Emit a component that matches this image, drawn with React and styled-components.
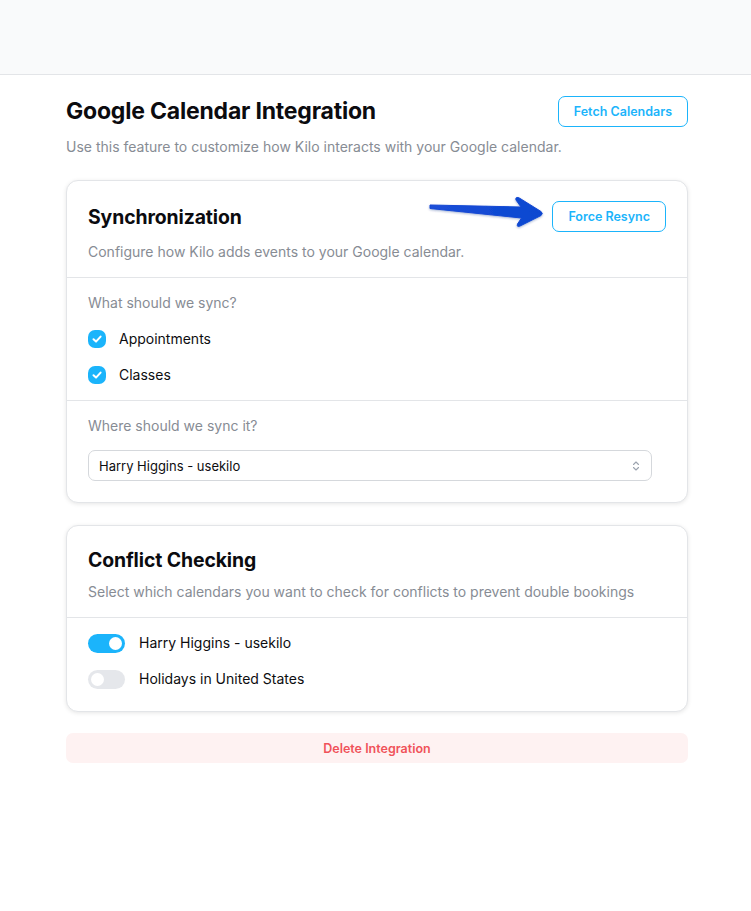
import React from "react";
import styled, { createGlobalStyle } from "styled-components";

const Global = createGlobalStyle`
  html, body { margin: 0; padding: 0; background: #ffffff; }
  body { font-family: Inter, "Noto Sans", "Liberation Sans", sans-serif; color: #0b0b0f; }
  * { box-sizing: border-box; }
`;

const SKY = "#1bb4fb";
const MUTED = "#878c94";
const LINE = "#e3e5e8";

const TopBar = styled.header`
  height: 75px;
  background: #f9fafb;
  border-bottom: 1px solid ${LINE};
`;

const Main = styled.main`
  width: 622px;
  margin-left: 66px;
  padding-top: 21px;
  display: flex;
  flex-direction: column;
`;

const PageHead = styled.div`
  display: flex;
  align-items: center;
  justify-content: space-between;
`;

const PageTitle = styled.h1`
  margin: 0;
  font-size: 23px;
  line-height: 29px;
  font-weight: 700;
  letter-spacing: -0.2px;
`;

const PageSub = styled.p`
  margin: 10px 0 0;
  font-size: 14px;
  line-height: 20px;
  color: ${MUTED};
`;

const OutlineButton = styled.button`
  height: 31px;
  padding: 0 15px;
  border: 1px solid ${SKY};
  border-radius: 7px;
  background: #fff;
  color: ${SKY};
  font-family: inherit;
  font-size: 12.5px;
  font-weight: 600;
  cursor: pointer;
`;

const Card = styled.section`
  position: relative;
  margin-top: ${(p) => p.$mt}px;
  border: 1px solid ${LINE};
  border-radius: 12px;
  background: #fff;
  box-shadow: 0 1px 4px rgba(0, 0, 0, 0.1);
`;

const CardHead = styled.div`
  padding: 20px 21px 15px;
  border-bottom: 1px solid ${LINE};
`;

const HeadRow = styled.div`
  position: relative;
  display: flex;
  align-items: center;
  justify-content: space-between;
  min-height: 28px;
`;

const CardTitle = styled.h2`
  margin: 0;
  font-size: 19.4px;
  line-height: 28px;
  font-weight: 700;
  letter-spacing: -0.1px;
`;

const CardDesc = styled.p`
  margin: ${(p) => p.$mt}px 0 0;
  font-size: 14px;
  line-height: 20px;
  color: ${MUTED};
`;

const Section = styled.div`
  padding: 15px 21px ${(p) => p.$pb || 15}px;
  border-bottom: ${(p) => (p.$last ? "none" : `1px solid ${LINE}`)};
  display: flex;
  flex-direction: column;
  gap: ${(p) => p.$gap || 16}px;
`;

const Label = styled.div`
  font-size: 14px;
  line-height: 20px;
  color: ${MUTED};
`;

const Option = styled.label`
  display: flex;
  align-items: center;
  gap: ${(p) => p.$gap}px;
  font-size: 14px;
  line-height: 20px;
  color: #0d0d10;
`;

const Check = styled.span`
  width: 18px;
  height: 18px;
  border-radius: 7px;
  background: ${SKY};
  display: flex;
  align-items: center;
  justify-content: center;
`;

const Select = styled.div`
  height: 31px;
  margin: -1px 14px 0 0;
  border: 1px solid #d5d8dc;
  border-radius: 7px;
  display: flex;
  align-items: center;
  justify-content: space-between;
  padding: 0 11px 0 10px;
  font-size: 13px;
  color: #0d0d10;
`;

const Toggle = styled.span`
  width: 37px;
  height: 19px;
  border-radius: 10px;
  background: ${(p) => (p.$on ? SKY : "#e5e7eb")};
  display: flex;
  align-items: center;
  justify-content: ${(p) => (p.$on ? "flex-end" : "flex-start")};
  padding: 0 3px;
`;

const Knob = styled.span`
  width: 13px;
  height: 13px;
  border-radius: 50%;
  background: #fff;
`;

const DangerButton = styled.button`
  margin-top: 21px;
  height: 30px;
  border: none;
  border-radius: 7px;
  background: #fef2f2;
  color: #f0525a;
  font-family: inherit;
  font-size: 12.5px;
  font-weight: 600;
`;

const Arrow = styled.svg`
  position: absolute;
  left: 338px;
  top: -6px;
  pointer-events: none;
`;

const CheckIcon = () => (
  <svg width="12" height="12" viewBox="0 0 12 12">
    <path d="M2.5 6.3 L5 8.6 L9.6 3.6" fill="none" stroke="#fff" strokeWidth="2" strokeLinecap="round" strokeLinejoin="round" />
  </svg>
);

const Chevrons = () => (
  <svg width="8" height="12" viewBox="0 0 8 12">
    <path d="M1.5 4.5 L4 2 L6.5 4.5 M1.5 7.5 L4 10 L6.5 7.5" fill="none" stroke="#9ca3af" strokeWidth="1.1" strokeLinecap="round" strokeLinejoin="round" />
  </svg>
);

const BlueArrow = () => (
  <Arrow width="130" height="40" viewBox="0 0 130 40">
    <defs>
      <linearGradient id="ag" x1="0" y1="0" x2="1" y2="0">
        <stop offset="0" stopColor="#1d4fd8" />
        <stop offset="1" stopColor="#0847d0" />
      </linearGradient>
      <filter id="as" x="-10%" y="-30%" width="120%" height="160%">
        <feDropShadow dx="0" dy="1" stdDeviation="0.8" floodColor="#0a2a80" floodOpacity="0.35" />
      </filter>
    </defs>
    <path
      d="M4 10 L95 12 L90 5 Q89 2 92.5 2.5 L115 16.5 Q117.5 18.5 115 20.5 L94 31 Q90.5 32.5 91.5 29 L95.5 23 L4 13.5 Z"
      fill="url(#ag)"
      stroke="#1448d4"
      strokeWidth="1"
      strokeLinejoin="round"
      filter="url(#as)"
    />
  </Arrow>
);

export default function App() {
  return (
    <>
      <Global />
      <TopBar />
      <Main>
        <PageHead>
          <PageTitle>Google Calendar Integration</PageTitle>
          <OutlineButton>Fetch Calendars</OutlineButton>
        </PageHead>
        <PageSub>Use this feature to customize how Kilo interacts with your Google calendar.</PageSub>

        <Card $mt={23}>
          <CardHead>
            <HeadRow>
              <CardTitle>Synchronization</CardTitle>
              <BlueArrow />
              <OutlineButton>Force Resync</OutlineButton>
            </HeadRow>
            <CardDesc $mt={10}>Configure how Kilo adds events to your Google calendar.</CardDesc>
          </CardHead>
          <Section>
            <Label>What should we sync?</Label>
            <Option $gap={13}>
              <Check><CheckIcon /></Check>
              Appointments
            </Option>
            <Option $gap={13}>
              <Check><CheckIcon /></Check>
              Classes
            </Option>
          </Section>
          <Section $last $pb={21} $gap={15}>
            <Label>Where should we sync it?</Label>
            <Select>
              <span>Harry Higgins - usekilo</span>
              <Chevrons />
            </Select>
          </Section>
        </Card>

        <Card $mt={22}>
          <CardHead>
            <CardTitle>Conflict Checking</CardTitle>
            <CardDesc $mt={8}>Select which calendars you want to check for conflicts to prevent double bookings</CardDesc>
          </CardHead>
          <Section $last $pb={22}>
            <Option $gap={14}>
              <Toggle $on><Knob /></Toggle>
              Harry Higgins - usekilo
            </Option>
            <Option $gap={14}>
              <Toggle><Knob /></Toggle>
              Holidays in United States
            </Option>
          </Section>
        </Card>

        <DangerButton>Delete Integration</DangerButton>
      </Main>
    </>
  );
}
